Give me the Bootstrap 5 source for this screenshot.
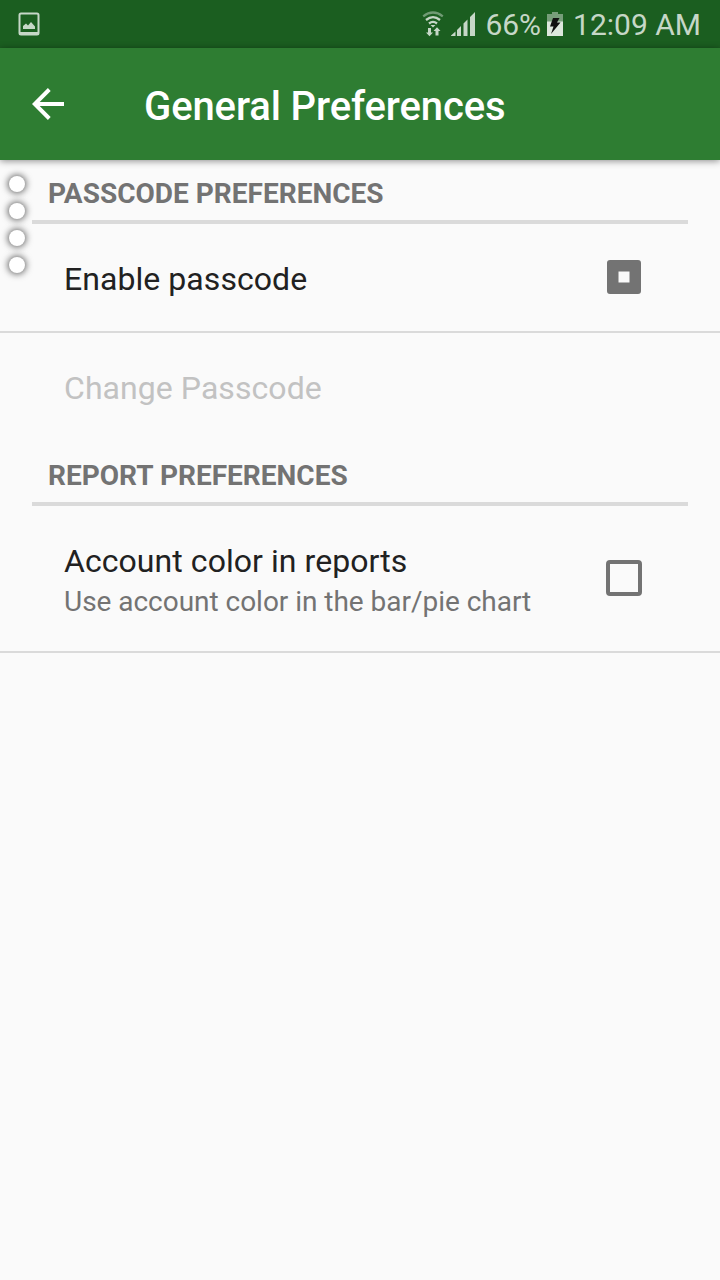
<!DOCTYPE html>
<html lang="en">
<head>
<meta charset="utf-8">
<meta name="viewport" content="width=device-width, initial-scale=1">
<title>General Preferences</title>
<link href="https://cdn.jsdelivr.net/npm/bootstrap@5.3.0/dist/css/bootstrap.min.css" rel="stylesheet">
<style>
body{font-family:Roboto,"Liberation Sans",sans-serif;background:#fafafa;color:#212121;min-height:1280px;overflow:hidden}
svg{display:block;flex:none}
.status-bar{height:48px;background:#1b5e20;color:#c6d7c7;padding:0 19px 0 18px;font-size:30px;line-height:46px}
.status-bar span{padding-top:2px}
.app-bar{height:112px;background:#2e7d32;padding:0 32px;box-shadow:0 1px 7px rgba(0,0,0,.45)}
.app-title{font-size:40px;line-height:48px;font-weight:500;letter-spacing:-.11px;margin:6px 0 0 80px}
.section-head{height:64px;margin:0 32px;padding:15px 16px 0;border-bottom:4px solid #dadada;color:#737373;font-size:28px;line-height:38px;font-weight:700;letter-spacing:.02px}
.pref-row{padding:0 78px 0 64px}
.pref-row.ruled{border-bottom:2px solid #dadada;padding-bottom:1px}
.pref-title{font-size:32px;line-height:38px;letter-spacing:.06px}
.pref-note{font-size:28px;line-height:34px;color:#737373;letter-spacing:-.03px;padding-top:5px}
.is-off{color:#c2c2c2}
.h-a{height:109px}.h-b{height:109px}.h-c{height:147px}
.dots{left:9px;top:176px;gap:11px}
.dots span{width:16px;height:16px;border-radius:50%;background:#fff;box-shadow:0 0 7px 1px rgba(0,0,0,.65)}
</style>
</head>
<body>
<div class="status-bar d-flex align-items-center">
  <svg width="22" height="24" viewBox="0 0 22 24"><rect x="1.5" y="1.5" width="19" height="21" rx="1.5" fill="none" stroke="#c6d7c7" stroke-width="2"/><path d="M1 20h20v3H1z" fill="#c6d7c7"/><path d="M5 17v-3l3-2.500 2 2 3-3.500 4 4.500V17z" fill="#c6d7c7"/></svg>
  <svg class="ms-auto" width="22" height="26" viewBox="0 0 22 26"><g fill="none" stroke="#c6d7c7" stroke-width="2.300"><path d="M1.200 5.300Q11-2.200 20.800 5.300" opacity=".5"/><path d="M4 9Q11 3.300 18 9"/><path d="M7 12.500Q11 9.300 15 12.500"/></g><path d="M8.500 14h5L11 16.500z" fill="#c6d7c7"/><path d="M6 17h3v4.500h2L7.500 25.300 4 21.500h2zM13.500 24.500h3V20h2L15 16.200 11.500 20h2z" fill="#c6d7c7"/></svg>
  <svg style="margin-left:7px" width="24" height="24" viewBox="0 0 24 24" fill="#c6d7c7"><path d="M0 24v-.5L4.500 19.500V24zM6 24v-6l4-4V24zM12.500 24V11.500l4-4V24zM19 24V5l5-5v24z"/></svg>
  <span style="margin-left:10px">66%</span>
  <svg style="margin-left:6px" width="16" height="24" viewBox="0 0 16 24"><path d="M5 0h6v2h5v8H0V2h5z" fill="#779e7a"/><path d="M0 9.500h16V24H0z" fill="#dde7dd"/><path d="M6 6h6.500L10 10.500h3.500L4 22l2.500-7.500H3z" fill="#111"/></svg>
  <span style="margin-left:10px">12:09 AM</span>
</div>
<header class="app-bar d-flex align-items-center text-white position-relative">
  <svg width="32" height="32" viewBox="0 0 32 32" fill="none" stroke="#fff" stroke-width="4"><path d="M32 16H4M17.300 1.500 2.800 16l14.500 14.500"/></svg>
  <h1 class="app-title">General Preferences</h1>
</header>
<main>
  <h2 class="section-head">PASSCODE PREFERENCES</h2>
  <div class="pref-row ruled h-a d-flex align-items-center justify-content-between">
    <div class="pref-title pt-1">Enable passcode</div>
    <svg width="36" height="36" viewBox="0 0 36 36" role="checkbox" aria-checked="true"><path fill="#737373" fill-rule="evenodd" d="M4 1h28a3 3 0 0 1 3 3v28a3 3 0 0 1-3 3H4a3 3 0 0 1-3-3V4a3 3 0 0 1 3-3zM12.500 12.500v11h11v-11z"/></svg>
  </div>
  <div class="pref-row h-b d-flex align-items-center"><div class="pref-title is-off">Change Passcode</div></div>
  <h2 class="section-head">REPORT PREFERENCES</h2>
  <div class="pref-row ruled h-c d-flex align-items-center justify-content-between">
    <div class="pt-1"><div class="pref-title">Account color in reports</div><div class="pref-note">Use account color in the bar/pie chart</div></div>
    <svg width="36" height="36" viewBox="0 0 36 36" role="checkbox" aria-checked="false"><rect x="2" y="2" width="32" height="32" rx="2" fill="none" stroke="#737373" stroke-width="4"/></svg>
  </div>
</main>
<div class="dots position-absolute d-flex flex-column"><span></span><span></span><span></span><span></span></div>
<script src="https://cdn.jsdelivr.net/npm/bootstrap@5.3.0/dist/js/bootstrap.bundle.min.js"></script>
</body>
</html>
